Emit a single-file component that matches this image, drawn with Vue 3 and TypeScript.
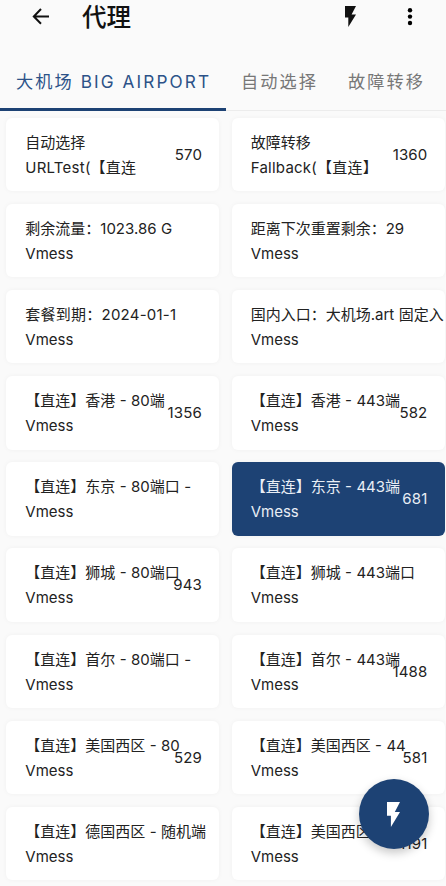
<script setup lang="ts">
import { ref } from 'vue'

interface Proxy {
  name: string
  kind: string
  delay?: number
  wide?: boolean
  group?: boolean
}

const tabs = ['大机场 BIG AIRPORT', '自动选择', '故障转移']
const activeTab = ref(0)
const selected = ref(9)

const proxies: Proxy[] = [
  { name: '自动选择', kind: 'URLTest(【直连', delay: 570, group: true },
  { name: '故障转移', kind: 'Fallback(【直连】', delay: 1360, group: true },
  { name: '剩余流量：1023.86 G', kind: 'Vmess' },
  { name: '距离下次重置剩余：29', kind: 'Vmess' },
  { name: '套餐到期：2024-01-1', kind: 'Vmess', wide: true },
  { name: '国内入口：大机场.art 固定入', kind: 'Vmess' },
  { name: '【直连】香港 - 80端', kind: 'Vmess', delay: 1356 },
  { name: '【直连】香港 - 443端', kind: 'Vmess', delay: 582 },
  { name: '【直连】东京 - 80端口 -', kind: 'Vmess' },
  { name: '【直连】东京 - 443端', kind: 'Vmess', delay: 681 },
  { name: '【直连】狮城 - 80端口', kind: 'Vmess', delay: 943 },
  { name: '【直连】狮城 - 443端口', kind: 'Vmess' },
  { name: '【直连】首尔 - 80端口 -', kind: 'Vmess' },
  { name: '【直连】首尔 - 443端', kind: 'Vmess', delay: 1488 },
  { name: '【直连】美国西区 - 80', kind: 'Vmess', delay: 529 },
  { name: '【直连】美国西区 - 44', kind: 'Vmess', delay: 581 },
  { name: '【直连】德国西区 - 随机端', kind: 'Vmess' },
  { name: '【直连】美国西区', kind: 'Vmess', delay: 1191 },
]
</script>

<template>
  <div class="screen">
    <header class="bar">
      <button class="icon back" aria-label="Back">
        <svg width="18" height="18" viewBox="0 0 18 18"><path d="M9 1 1.8 8.5 9 15.8M2 8.5H17" fill="none" stroke="currentColor" stroke-width="2" /></svg>
      </button>
      <h1>代理</h1>
      <button class="icon bolt" aria-label="Test">
        <svg width="11" height="21" viewBox="0 0 10 20" preserveAspectRatio="none"><path d="M0 0V11H3V20L10 8H6L10 0Z" fill="currentColor" /></svg>
      </button>
      <button class="icon more" aria-label="More">
        <svg width="6" height="18" viewBox="0 0 6 18"><circle cx="3" cy="2.3" r="2.2" /><circle cx="3" cy="8.6" r="2.2" /><circle cx="3" cy="15" r="2.2" /></svg>
      </button>
    </header>
    <nav class="tabs">
      <button v-for="(tab, i) in tabs" :key="tab" class="tab" :class="{ active: i === activeTab }" @click="activeTab = i">{{ tab }}</button>
    </nav>
    <main class="grid">
      <article v-for="(p, i) in proxies" :key="i" class="card" :class="{ selected: i === selected }" @click="selected = i">
        <div class="name" :class="{ wide: p.wide }">{{ p.name }}</div>
        <div class="kind" :class="{ group: p.group }">{{ p.kind }}</div>
        <span v-if="p.delay" class="delay">{{ p.delay }}</span>
      </article>
    </main>
    <button class="fab" aria-label="Test all">
      <svg width="13" height="25" viewBox="0 0 10 20" preserveAspectRatio="none"><path d="M0 0V11H3V20L10 8H6L10 0Z" fill="currentColor" /></svg>
    </button>
  </div>
</template>

<style>
body {
  overflow: hidden;
  background: #fafafa;
}
</style>

<style scoped>
.screen {
  position: relative;
  box-sizing: border-box;
  width: 446px;
  height: 886px;
  overflow: hidden;
  background: #fafafa;
  color: #222;
  font-family: Inter, "Noto Sans CJK SC", sans-serif;
  font-size: 15px;
  text-spacing-trim: space-all;
}
button {
  padding: 0;
  border: 0;
  background: none;
  color: inherit;
  font: inherit;
}
.bar {
  display: flex;
  align-items: center;
  height: 33px;
  padding: 0 33px 0 32px;
  color: #111;
}
.icon {
  display: flex;
}
.bolt {
  margin-top: -1px;
}
h1 {
  flex: 1;
  margin: 2px 0 0 32px;
  font-size: 24.5px;
  font-weight: 500;
  line-height: 33px;
}
.more {
  margin-left: 51px;
}
.tabs {
  display: flex;
  box-sizing: border-box;
  height: 78px;
  margin-right: -20px;
  padding-top: 22px;
  border-bottom: 1px solid #ececec;
}
.tab {
  flex: none;
  box-sizing: border-box;
  width: 107px;
  height: 56px;
  padding: 0 0 6px 0;
  color: #777;
  font-size: 17.2px;
  letter-spacing: 2px;
  white-space: nowrap;
}
.tab.active {
  width: 226px;
  border-bottom: 3px solid #1d4274;
  padding: 0 0 3px 1px;
  color: #2c5288;
  letter-spacing: 2.1px;
}
.grid {
  display: grid;
  grid-template-columns: 213px 213px;
  grid-auto-rows: 73.3px;
  gap: 12.8px 12.4px;
  padding: 7px 0 0 6.3px;
}
.card {
  position: relative;
  box-sizing: border-box;
  min-width: 0;
  padding: 12px 0 0 19px;
  border-radius: 6px;
  background: #fff;
  box-shadow: 0 0 5px rgba(0, 0, 0, 0.045);
  line-height: 25px;
  white-space: nowrap;
}
.card.selected {
  background: #1d4274;
  color: #e9eef5;
}
.name {
  word-spacing: 0.2px;
}
.name.wide {
  letter-spacing: 0.24px;
}
.kind.group {
  letter-spacing: 0.24px;
}
.delay {
  position: absolute;
  top: 24px;
  right: 17.3px;
  letter-spacing: 0.15px;
}
.fab {
  position: absolute;
  right: 17px;
  bottom: 37px;
  display: flex;
  align-items: center;
  justify-content: center;
  box-sizing: border-box;
  width: 70px;
  height: 70px;
  padding-right: 2px;
  border-radius: 50%;
  background: #1d4274;
  color: #fff;
  box-shadow: 0 4px 10px rgba(0, 0, 0, 0.22);
}
</style>
